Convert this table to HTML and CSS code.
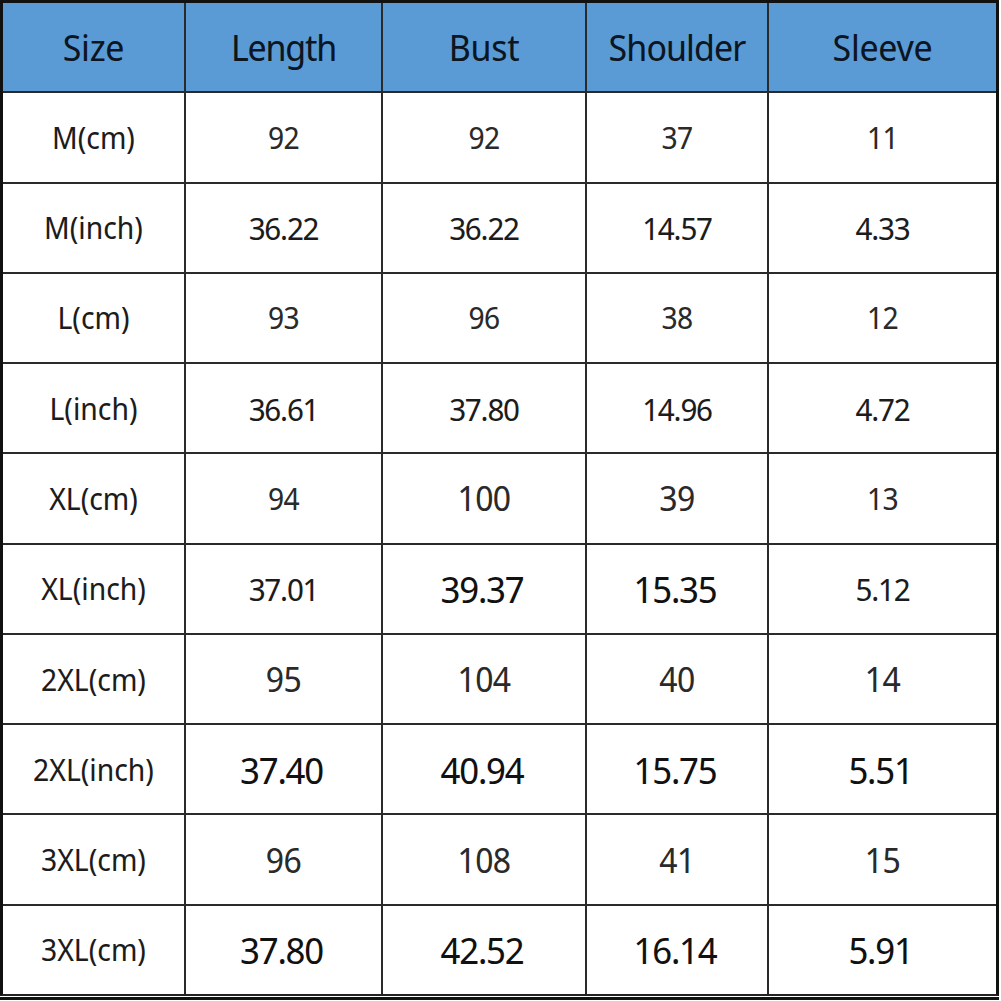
FILE: index.html
```html
<!DOCTYPE html>
<html lang="en">
<head>
<meta charset="utf-8">
<title>Size Chart</title>
<link rel="stylesheet" href="styles.css">
</head>
<body>
<div class="chart">
  <div class="grid">
    <div class="cell head">Size</div>
    <div class="cell head tight">Length</div>
    <div class="cell head">Bust</div>
    <div class="cell head shoulder">Shoulder</div>
    <div class="cell head">Sleeve</div>

    <div class="cell label">M(cm)</div>
    <div class="cell s1">92</div>
    <div class="cell s1">92</div>
    <div class="cell s1">37</div>
    <div class="cell s1">11</div>

    <div class="cell label">M(inch)</div>
    <div class="cell s2">36.22</div>
    <div class="cell s2">36.22</div>
    <div class="cell s2">14.57</div>
    <div class="cell s2">4.33</div>

    <div class="cell label">L(cm)</div>
    <div class="cell s1">93</div>
    <div class="cell s1">96</div>
    <div class="cell s1">38</div>
    <div class="cell s1">12</div>

    <div class="cell label">L(inch)</div>
    <div class="cell s2">36.61</div>
    <div class="cell s2">37.80</div>
    <div class="cell s2">14.96</div>
    <div class="cell s2">4.72</div>

    <div class="cell label">XL(cm)</div>
    <div class="cell s1">94</div>
    <div class="cell s3">100</div>
    <div class="cell s3">39</div>
    <div class="cell s1">13</div>

    <div class="cell label">XL(inch)</div>
    <div class="cell s2">37.01</div>
    <div class="cell s4">39.37</div>
    <div class="cell s4">15.35</div>
    <div class="cell s2">5.12</div>

    <div class="cell label">2XL(cm)</div>
    <div class="cell s3">95</div>
    <div class="cell s3">104</div>
    <div class="cell s3">40</div>
    <div class="cell s3">14</div>

    <div class="cell label">2XL(inch)</div>
    <div class="cell s4">37.40</div>
    <div class="cell s4">40.94</div>
    <div class="cell s4">15.75</div>
    <div class="cell s4">5.51</div>

    <div class="cell label">3XL(cm)</div>
    <div class="cell s3">96</div>
    <div class="cell s3">108</div>
    <div class="cell s3">41</div>
    <div class="cell s3">15</div>

    <div class="cell label">3XL(cm)</div>
    <div class="cell s4">37.80</div>
    <div class="cell s4">42.52</div>
    <div class="cell s4">16.14</div>
    <div class="cell s4">5.91</div>
  </div>
</div>
</body>
</html>
```
FILE: styles.css
```css
html, body {
  margin: 0;
  padding: 0;
  background: #ffffff;
}

.chart {
  width: 999px;
  padding-bottom: 1px;
  border-bottom: 3px solid #111;
  background: #ffffff;
}

.grid {
  display: grid;
  grid-template-columns: 181px 195px 202px 180px 227px;
  grid-template-rows: repeat(11, 1fr);
  column-gap: 2px;
  row-gap: 2px;
  height: 991px;
  border-top: 3px solid #111;
  border-left: 3px solid #111;
  border-right: 3px solid #111;
  border-bottom: 2px solid #222;
  background: #2a2a2a;
}

.cell {
  display: flex;
  align-items: center;
  justify-content: center;
  background: #ffffff;
  color: #1c1c1c;
  font-family: "Noto Sans Display", "Noto Sans", "Open Sans", sans-serif;
  font-weight: 400;
  white-space: nowrap;
}

.head {
  background: #5b9bd5;
  color: #0c1622;
  font-size: 36px;
  letter-spacing: -0.3px;
}

.head.tight {
  letter-spacing: -1.2px;
}

.head.shoulder {
  letter-spacing: -0.9px;
}

.label {
  font-size: 30px;
  letter-spacing: 0px;
}

.s1 {
  font-size: 30px;
  letter-spacing: -0.6px;
  color: #2a2a2a;
}

.s2 {
  font-size: 31.5px;
  letter-spacing: -1.2px;
}

.s3 {
  font-size: 34px;
  letter-spacing: -0.6px;
  color: #2a2a2a;
}

.s4 {
  font-size: 37px;
  letter-spacing: -1.2px;
  color: #111;
  padding-right: 4px;
}
```
